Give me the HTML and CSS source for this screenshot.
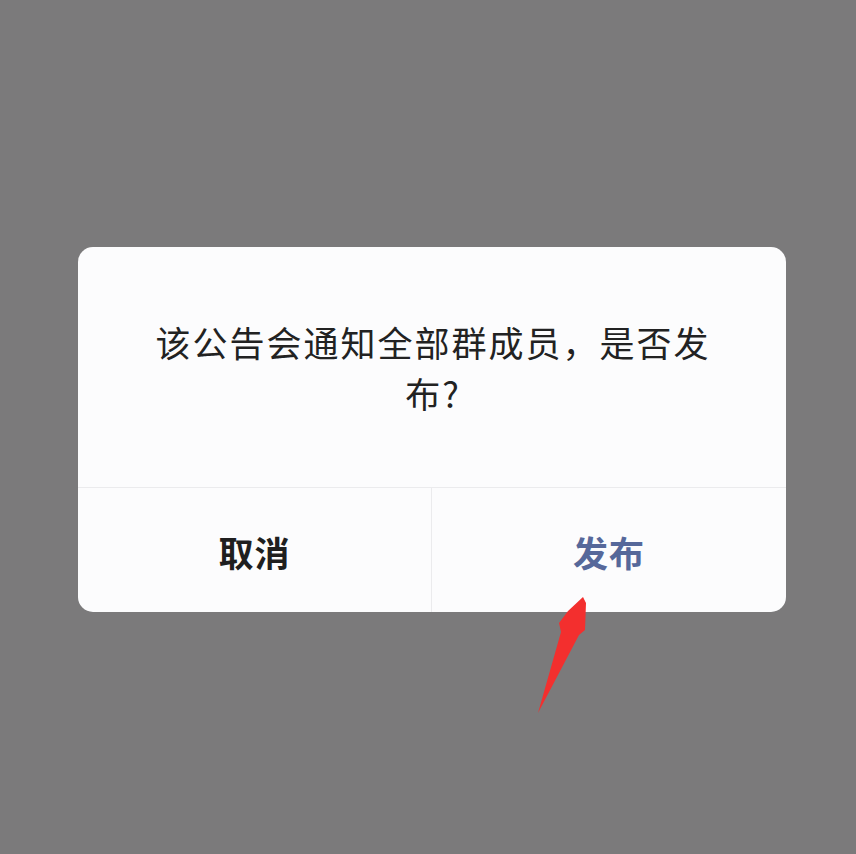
FILE: index.html
```html
<!DOCTYPE html>
<html lang="zh">
<head>
<meta charset="utf-8">
<title>发布公告</title>
<link rel="stylesheet" href="styles.css">
</head>
<body>
  <div class="dialog">
    <div class="message">
      <p class="message-text">该公告会通知全部群成员，是否发布?</p>
    </div>
    <div class="actions">
      <div class="action cancel">取消</div>
      <div class="action confirm">发布</div>
    </div>
  </div>
  <svg class="arrow" width="856" height="854" viewBox="0 0 856 854" aria-hidden="true">
    <polygon points="583,597 586,603 585,630 579,635 538,713 561,632 559,623 568,611" fill="#f32f2e"/>
  </svg>
</body>
</html>
```

FILE: styles.css
```css
html, body {
  margin: 0;
  padding: 0;
}
body {
  width: 856px;
  height: 854px;
  background: #7b7a7b;
  font-family: "Noto Sans CJK SC", "Noto Sans", sans-serif;
  position: relative;
  overflow: hidden;
}
.dialog {
  margin: 247px 0 0 78px;
  width: 708px;
  height: 365px;
  background: #fcfcfd;
  border-radius: 15px;
  display: flex;
  flex-direction: column;
  overflow: hidden;
}
.message {
  height: 240px;
  display: flex;
  align-items: center;
  justify-content: center;
  padding: 0 58px;
}
.message-text {
  margin: 0;
  font-size: 35px;
  font-weight: 400;
  line-height: 51px;
  letter-spacing: 2px;
  padding-left: 2px;
  color: #222222;
  text-align: center;
}
.actions {
  flex: 1;
  display: grid;
  grid-template-columns: 353px 1fr;
  border-top: 1px solid #ebebed;
}
.action {
  display: flex;
  align-items: center;
  justify-content: center;
  font-size: 35px;
  font-weight: 700;
  letter-spacing: 1px;
  padding-top: 2px;
}
.cancel {
  color: #1f1f1f;
}
.confirm {
  color: #56689a;
  border-left: 1px solid #ebebed;
}
.arrow {
  position: absolute;
  left: 0;
  top: 0;
  pointer-events: none;
}
```
